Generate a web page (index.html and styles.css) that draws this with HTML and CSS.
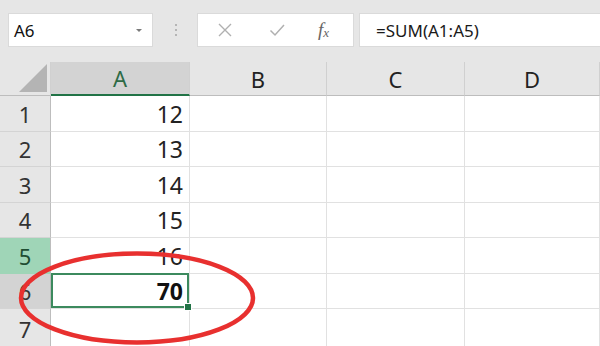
FILE: index.html
```html
<!DOCTYPE html>
<html>
<head>
<meta charset="utf-8">
<link rel="stylesheet" href="styles.css">
</head>
<body>
<div class="app">
  <div class="toolbar">
    <div class="namebox">
      <span class="name">A6</span>
      <svg class="caret" width="8" height="5" viewBox="0 0 8 5"><path d="M1 1 L4 4 L7 1 Z" fill="#7a7a7a"/></svg>
    </div>
    <div class="sep"><i></i><i></i><i></i></div>
    <div class="btnbox">
      <svg class="ico" width="16" height="16" viewBox="0 0 16 16"><path d="M2 2 L14 14 M14 2 L2 14" stroke="#b0b0b0" stroke-width="1.4" fill="none"/></svg>
      <svg class="ico" width="16" height="16" viewBox="0 0 16 16"><path d="M1.5 8.5 L6 13 L15 3" stroke="#b0b0b0" stroke-width="1.5" fill="none"/></svg>
      <span class="fx">f<sub>x</sub></span>
    </div>
    <div class="formula">=SUM(A1:A5)</div>
  </div>
  <div class="sheet">
    <div class="corner"><span class="tri"></span></div>
    <div class="colh active">A</div>
    <div class="colh">B</div>
    <div class="colh">C</div>
    <div class="colh">D</div>

    <div class="rowh">1</div><div class="cell num">12</div><div class="cell"></div><div class="cell"></div><div class="cell"></div>
    <div class="rowh">2</div><div class="cell num">13</div><div class="cell"></div><div class="cell"></div><div class="cell"></div>
    <div class="rowh">3</div><div class="cell num">14</div><div class="cell"></div><div class="cell"></div><div class="cell"></div>
    <div class="rowh">4</div><div class="cell num">15</div><div class="cell"></div><div class="cell"></div><div class="cell"></div>
    <div class="rowh rsel">5</div><div class="cell num">16</div><div class="cell"></div><div class="cell"></div><div class="cell"></div>
    <div class="rowh ract">6</div><div class="cell num sel"><b>70</b></div><div class="cell"></div><div class="cell"></div><div class="cell"></div>
    <div class="rowh">7</div><div class="cell"></div><div class="cell"></div><div class="cell"></div><div class="cell"></div>
  </div>
  <svg class="mark" width="600" height="346" viewBox="0 0 600 346">
    <ellipse cx="137" cy="298" rx="116" ry="44.5" fill="none" stroke="#e8302f" stroke-width="4.5"/>
  </svg>
</div>
</body>
</html>
```
FILE: styles.css
```css
* { box-sizing: border-box; }
html, body { margin: 0; padding: 0; }
body {
  width: 600px;
  height: 346px;
  overflow: hidden;
  background: #fff;
  font-family: "Noto Sans", "Open Sans", "DejaVu Sans", sans-serif;
  color: #222;
}
.app { position: relative; width: 600px; height: 346px; overflow: hidden; }

.toolbar {
  height: 62px;
  background: #e6e6e6;
  display: flex;
  align-items: flex-start;
  padding: 13px 0 0 8px;
}
.namebox {
  width: 145px;
  height: 34px;
  background: #fff;
  border: 1px solid #dadada;
  display: flex;
  align-items: center;
  justify-content: space-between;
  padding: 0 9px 0 5px;
}
.name { font-size: 17px; color: #111; }
.caret { margin-top: 1px; }
.sep {
  width: 44px;
  height: 34px;
  display: flex;
  flex-direction: column;
  align-items: center;
  justify-content: center;
  gap: 3px;
  padding-left: 1px;
}
.sep i { display: block; width: 2px; height: 2px; background: #a5a5a5; border-radius: 1px; }
.btnbox {
  width: 157px;
  height: 34px;
  background: #fff;
  border: 1px solid #dadada;
  display: flex;
  align-items: center;
  padding-left: 19px;
  gap: 36px;
}
.fx {
  font-family: "Liberation Serif", "DejaVu Serif", serif;
  font-style: italic;
  font-size: 19px;
  color: #666;
  margin-left: -3px;
}
.fx sub { font-size: 13px; vertical-align: -1px; }
.formula {
  flex: 1;
  height: 34px;
  margin-left: 5px;
  background: #fff;
  border: 1px solid #dadada;
  border-right: 0;
  display: flex;
  align-items: center;
  padding-left: 16px;
  font-size: 17px;
  color: #1a1a1a;
}

.sheet {
  display: grid;
  grid-template-columns: 51px 139px 137px 138px 135px;
  grid-template-rows: 34px 36px 35px 36px 35px 36px 35px 40px;
}
.corner {
  background: #e6e6e6;
  border-right: 1px solid #d0d0d0;
  border-bottom: 1px solid #bdbdbd;
  position: relative;
}
.tri {
  position: absolute;
  right: 3px;
  bottom: 3px;
  width: 0;
  height: 0;
  border-left: 28px solid transparent;
  border-bottom: 28px solid #b4b4b4;
}
.colh {
  background: #e6e6e6;
  border-right: 1px solid #d0d0d0;
  border-bottom: 1px solid #bdbdbd;
  display: flex;
  align-items: center;
  justify-content: center;
  font-size: 22px;
  color: #222;
}
.colh.active {
  background: #d3d3d3;
  color: #2e6b46;
  border-bottom: 2px solid #217346;
}
.rowh {
  background: #e6e6e6;
  border-right: 1px solid #bdbdbd;
  border-bottom: 1px solid #d4d4d4;
  display: flex;
  align-items: center;
  justify-content: center;
  font-size: 22px;
  color: #333;
}
.rowh.rsel { background: #9fd5b7; color: #1f4d33; border-bottom-color: #9fd5b7; }
.rowh.ract { background: #d3d3d3; }
.cell {
  border-right: 1px solid #e1e1e1;
  border-bottom: 1px solid #e1e1e1;
}
.cell.num {
  display: flex;
  align-items: center;
  justify-content: flex-end;
  padding-right: 6px;
  font-size: 23px;
  color: #222;
}
.cell.num b { font-weight: 700; color: #111; }
.cell.sel {
  position: relative;
  box-shadow: inset 0 0 0 2px #3c8a5e;
  margin: -1px 0 0 0;
}
.cell.sel::after {
  content: "";
  position: absolute;
  right: -3px;
  bottom: -3px;
  width: 6px;
  height: 6px;
  background: #217346;
  border: 1px solid #fff;
}
.mark { position: absolute; left: 0; top: 0; pointer-events: none; }
```
